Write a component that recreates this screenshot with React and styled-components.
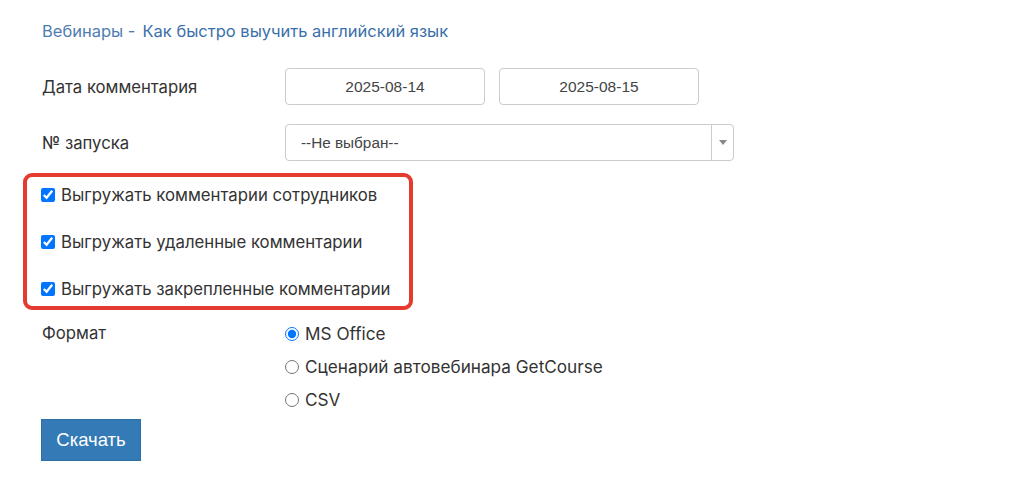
import React from "react";
import styled, { createGlobalStyle } from "styled-components";

const Global = createGlobalStyle`
  html, body { margin: 0; padding: 0; background: #fff; }
  body { font-family: Inter, "Noto Sans", sans-serif; color: #333; }
`;

const Page = styled.div`
  padding: 20px 0 0 42px;
  width: 1012px;
  box-sizing: border-box;
`;

const Crumbs = styled.div`
  font-size: 16.5px;
  line-height: 22px;
  margin-bottom: 26px;
  display: flex;
  gap: 7px;
`;

const Crumb = styled.a`
  color: ${(p) => (p.$muted ? "#4f7db1" : "#3a70aa")};
  text-decoration: none;
`;

const FormRow = styled.div`
  display: grid;
  grid-template-columns: 243px auto;
  align-items: ${(p) => (p.$top ? "start" : "center")};
  margin-top: ${(p) => p.$mt || 0}px;
  margin-bottom: ${(p) => p.$mb || 0}px;
`;

const Label = styled.div`
  font-size: 16.7px;
  line-height: 22px;
  color: #333;
`;

const Controls = styled.div`
  display: flex;
  gap: 14px;
`;

const DateInput = styled.input`
  width: 200px;
  height: 37px;
  box-sizing: border-box;
  border: 1px solid #ccc;
  border-radius: 4px;
  text-align: center;
  font-family: "Liberation Sans", Arial, sans-serif;
  font-size: 15.5px;
  color: #444;
  padding: 0;
  outline: none;
`;

const Select = styled.div`
  width: 449px;
  height: 37px;
  box-sizing: border-box;
  border: 1px solid #ccc;
  border-radius: 4px;
  display: flex;
  align-items: center;
  font-family: "Liberation Sans", Arial, sans-serif;
  font-size: 15.3px;
  color: #444;
`;

const SelectValue = styled.div`
  flex: 1;
  padding-left: 15px;
`;

const SelectArrow = styled.div`
  width: 21px;
  height: 100%;
  border-left: 1px solid #ccc;
  display: flex;
  align-items: center;
  justify-content: center;
  &::after {
    content: "";
    border-left: 4px solid transparent;
    border-right: 4px solid transparent;
    border-top: 5px solid #888;
  }
`;

const Highlight = styled.div`
  margin: 12px 0 0 -19px;
  width: 390px;
  box-sizing: border-box;
  border: 4px solid #e53a2f;
  border-radius: 9px;
  padding: 6px 0 5px 14px;
  display: flex;
  flex-direction: column;
  gap: 23px;
`;

const CheckRow = styled.label`
  display: flex;
  align-items: center;
  gap: 6px;
  font-size: 16.75px;
  line-height: 24px;
  color: #333;
`;

const Check = styled.input`
  margin: 0;
  width: 14px;
  height: 14px;
  accent-color: #0075ff;
`;

const RadioGroup = styled.div`
  display: flex;
  flex-direction: column;
  gap: 9px;
`;

const RadioRow = styled.label`
  display: flex;
  align-items: center;
  gap: 6px;
  font-size: 17.2px;
  line-height: 24px;
  color: #333;
`;

const Radio = styled.input`
  margin: 0;
  width: 14px;
  height: 14px;
  accent-color: #0075ff;
`;

const Button = styled.button`
  margin-top: 7px;
  margin-left: -1px;
  width: 100px;
  height: 42px;
  background: #337ab7;
  border: 1px solid #2e6da4;
  color: #fff;
  font-family: "Liberation Sans", Arial, sans-serif;
  font-size: 18.5px;
  padding: 0;
`;

export default function App() {
  return (
    <>
      <Global />
      <Page>
        <Crumbs>
          <Crumb $muted href="#">Вебинары -</Crumb>
          <Crumb href="#">Как быстро выучить английский язык</Crumb>
        </Crumbs>
        <FormRow $mb={19}>
          <Label>Дата комментария</Label>
          <Controls>
            <DateInput defaultValue="2025-08-14" />
            <DateInput defaultValue="2025-08-15" />
          </Controls>
        </FormRow>
        <FormRow>
          <Label>№ запуска</Label>
          <Select>
            <SelectValue>--Не выбран--</SelectValue>
            <SelectArrow />
          </Select>
        </FormRow>
        <Highlight>
          <CheckRow><Check type="checkbox" defaultChecked />Выгружать комментарии сотрудников</CheckRow>
          <CheckRow><Check type="checkbox" defaultChecked />Выгружать удаленные комментарии</CheckRow>
          <CheckRow><Check type="checkbox" defaultChecked />Выгружать закрепленные комментарии</CheckRow>
        </Highlight>
        <FormRow $top $mt={12}>
          <Label>Формат</Label>
          <RadioGroup>
            <RadioRow><Radio type="radio" name="fmt" defaultChecked />MS Office</RadioRow>
            <RadioRow><Radio type="radio" name="fmt" />Сценарий автовебинара GetCourse</RadioRow>
            <RadioRow><Radio type="radio" name="fmt" />CSV</RadioRow>
          </RadioGroup>
        </FormRow>
        <Button>Скачать</Button>
      </Page>
    </>
  );
}
